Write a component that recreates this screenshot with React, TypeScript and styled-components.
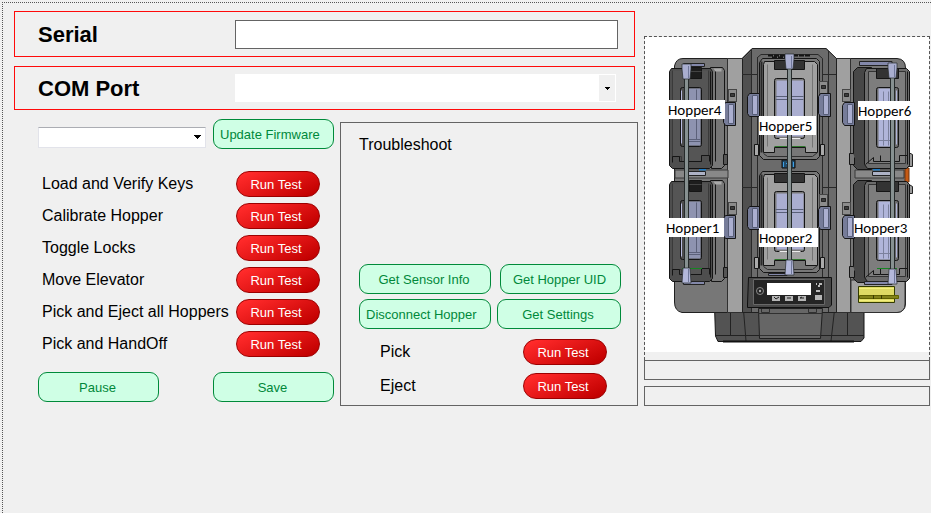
import React from "react";
import styled, { createGlobalStyle } from "styled-components";

const GlobalStyle = createGlobalStyle`
  *, *::before, *::after { box-sizing: border-box; }
  body {
    margin: 0;
    background: #f0f0f0;
    color: #000;
    font-family: "Liberation Sans", Arial, sans-serif;
    font-size: 16px;
  }
  button, input, select { font: inherit; margin: 0; }
`;

const Page = styled.main`
  display: grid;
  grid-template-columns: minmax(0, 624fr) minmax(0, 286fr);
  gap: 6px;
  align-items: start;
  min-height: calc(100vh - 2px);
  margin: 2px 0 0 2px;
  padding: 8px 1px 0 11px;
  border-top: 1px dotted #555;
  border-left: 1px dotted #555;
`;

const Controls = styled.div`
  display: flex;
  flex-direction: column;
`;

const FieldBox = styled.div<{ $height: number; $right: number }>`
  display: grid;
  grid-template-columns: 197px minmax(0, 1fr);
  align-items: center;
  height: ${(p) => p.$height}px;
  margin: 0 3px 9px 0;
  padding: 0 ${(p) => p.$right}px 0 23px;
  border: 1px solid #ff0a0a;
`;

const FieldLabel = styled.label`
  padding-top: 2px;
  font-size: 22px;
  line-height: 26px;
  font-weight: 700;
`;

const TextInput = styled.input`
  width: 100%;
  height: 29px;
  padding: 0 6px;
  border: 1px solid #646464;
  border-radius: 0;
  background: #fff;
`;

const SelectWrap = styled.div`
  display: grid;
  grid-template-columns: minmax(0, 1fr) 17px;
  align-items: center;
`;

const Select = styled.select<{ $large?: boolean }>`
  grid-area: 1 / 1 / 2 / 3;
  appearance: none;
  width: 100%;
  height: ${(p) => (p.$large ? 28 : 21)}px;
  padding: 0 22px 0 6px;
  border: 1px solid ${(p) => (p.$large ? "#fff" : "#e2e3ea")};
  border-top-color: ${(p) => (p.$large ? "#fff" : "#abadb3")};
  border-radius: 0;
  background: #fff;
`;

const ArrowCell = styled.span<{ $shaded?: boolean }>`
  grid-area: 1 / 2;
  display: flex;
  align-items: center;
  justify-content: center;
  height: ${(p) => (p.$shaded ? 26 : 18)}px;
  margin-right: 1px;
  background: ${(p) => (p.$shaded ? "#f0f0f0" : "transparent")};
  pointer-events: none;
`;

const Lower = styled.div`
  display: grid;
  grid-template-columns: minmax(0, 296fr) minmax(0, 298fr);
  gap: 6px;
  align-items: start;
  margin-left: 24px;
`;

const Tests = styled.section`
  display: flex;
  flex-direction: column;
`;

const FirmwareRow = styled.div`
  display: grid;
  grid-template-columns: minmax(0, 1fr) 121px;
  gap: 7px;
  align-items: center;
  height: 30px;
`;

const FirmwareSelect = styled(SelectWrap)`
  padding-top: 6px;
`;

const GreenButton = styled.button<{ $align?: "left" | "center" }>`
  width: 100%;
  height: 30px;
  padding: 2px 8px 0 6px;
  border: 1px solid #008a3a;
  border-radius: 9px;
  background: #cfffe5;
  color: #00883a;
  font-size: 13px;
  line-height: 16px;
  text-align: ${(p) => p.$align ?? "center"};
  white-space: nowrap;
`;

const RedButton = styled.button`
  width: 84px;
  height: 26px;
  padding: 2px 4px 0 0;
  border: 1px solid #9c0000;
  border-radius: 13px;
  background: linear-gradient(155deg, #ff2a2a 10%, #c20000 92%);
  color: #fff;
  font-size: 13px;
  line-height: 16px;
`;

const TestList = styled.ul`
  display: flex;
  flex-direction: column;
  gap: 6px;
  margin: 22px 0 0;
  padding: 0 14px 0 4px;
  list-style: none;
`;

const TestRow = styled.li`
  display: flex;
  align-items: center;
  justify-content: space-between;
  line-height: 20px;
  white-space: nowrap;
`;

const ActionRow = styled.div`
  display: grid;
  grid-template-columns: 121px 121px;
  justify-content: space-between;
  margin-top: 15px;
`;

const Troubleshoot = styled.section`
  margin-top: 3px;
  height: 284px;
  padding: 0 16px 6px 18px;
  border: 1px solid #646464;
  display: flex;
  flex-direction: column;
  justify-content: space-between;
`;

const Title = styled.h2`
  margin: 12px 0 0;
  font-size: 16px;
  line-height: 20px;
  font-weight: 400;
`;

const ButtonRow = styled.div<{ $gap: number }>`
  display: grid;
  grid-template-columns: 132px minmax(0, 1fr);
  gap: ${(p) => p.$gap}px;
  margin-bottom: 5px;
`;

const PickList = styled(TestList)`
  gap: 8px;
  margin: 10px 0 0;
  padding: 0 14px 0 21px;
`;

const Device = styled.section`
  display: flex;
  flex-direction: column;
  margin-top: 25px;
`;

const PictureFrame = styled.figure`
  margin: 0;
  padding-bottom: 8px;
  border: 1px dashed #555;
  border-bottom: 0;
`;

const Picture = styled.svg`
  display: block;
  width: 100%;
  height: auto;
  background: #fff;
`;

const StatusBox = styled.output`
  display: block;
  height: 20px;
  margin-bottom: 6px;
  border: 1px solid #646464;
`;

const Arrow = ({ small }: { small?: boolean }) =>
  small ? (
    <svg width="5" height="3" viewBox="0 0 5 3" shapeRendering="crispEdges" aria-hidden="true">
      <path d="M0 0H5V1H4V2H3V3H2V2H1V1H0Z" />
    </svg>
  ) : (
    <svg width="7" height="4" viewBox="0 0 7 4" shapeRendering="crispEdges" aria-hidden="true">
      <path d="M0 0H7V1H6V2H5V3H4V4H3V3H2V2H1V1H0Z" />
    </svg>
  );

/* Outer-column hopper with its origin at the top left of the bin. */
const LeftHopper = ({ y }: { y: number }) => (
  <g transform={`translate(669.5 ${y + 0.5})`} stroke="#151515">
    <path d="M41 0H53L55 3V98L52 101H42Z" fill="#777" />
    <path d="M44 1H52V4H46Z" fill="#aaa" stroke="none" />
    <path d="M2 1H41L43 4V98L40 101H3L0 98V4Z" fill="#4e4e4e" />
    <path d="M41 4V97M46 4V94" fill="none" />
    <path d="M3 3V89H12V94H32V88H39V3" fill="#555" stroke="#3a3a3a" />
    <path d="M3 95V89H10V94H32V88H40V94" fill="none" />
    <path d="M20 0H32V11H20Z" fill="#1d1d1d" />
    <path d="M20 4H32" stroke="#444" />
    <rect x="11" y="20" width="21" height="59" rx="2" fill="#4c4c4c" />
    <path d="M12 23V76" stroke="#b8bce0" />
    <rect x="19" y="21" width="12" height="57" fill="#8e93b0" stroke="none" />
    <path d="M27 22V72M19 72H31M19 74H31" stroke="#5c617a" />
    <path d="M54 87H58V97H54Z" fill="#555" />
  </g>
);

const RightHopper = ({ y }: { y: number }) => (
  <g transform={`translate(853.5 ${y + 0.5})`} stroke="#151515">
    <path d="M4 0H18V102H4L0 98V4Z" fill="#474747" />
    <path d="M13 1H53L56 4V98L53 101H14L11 97V5Z" fill="#6c6c6c" />
    <path d="M15 4H52V96H15Z" fill="#7d7d7d" stroke="#333" />
    <path d="M12 97L20 90V94H27V88M27 94H46V88H54V97M54 4V90" fill="none" />
    <path d="M23 1H45V11H23Z" fill="#333" />
    <rect x="23" y="20" width="22" height="60" rx="2" fill="#6b6b6b" />
    <rect x="25" y="21" width="14" height="58" fill="#b0b5da" stroke="none" />
    <path d="M43 23V77" stroke="#b0b5da" />
    <path d="M30 24V78M35 24V78M25 73H39" stroke="#7b819d" />
    <path d="M0 86H-4V97H1V90" fill="#777" />
  </g>
);

const CenterHopper = ({ y }: { y: number }) => (
  <g transform={`translate(759.5 ${y + 0.5})`} stroke="#151515">
    <path d="M3 0H57L60 3V98L57 101H4L0 97V4Z" fill="#777" />
    <path d="M1 3H3V94H1Z" fill="#292929" stroke="none" />
    <path d="M5 3H55L58 6V94H46V89H15V94H4V6Z" fill="#a0a0a0" />
    <path d="M8 6V88M53 6V89" stroke="#747474" fill="none" />
    <path d="M4 95L8 98H53L58 94" stroke="#303030" fill="none" />
    <path d="M15 2H45V11H15Z" fill="#333" />
    <rect x="15" y="20" width="30" height="60" rx="2" fill="#787878" />
    <path d="M17 22H44V78H17Z" fill="#aaaed0" stroke="none" />
    <path d="M16 38H44M16 41H44" stroke="#596078" />
    <path d="M20 80H41" stroke="#ececec" />
    <path d="M15 88H46" stroke="#30782e" />
    <path d="M-5 86H-1V97H-5ZM61 86H65V97H61Z" fill="#aaa" />
  </g>
);

const Clip = ({ x, y }: { x: number; y: number }) => (
  <g transform={`translate(${x + 0.5} ${y + 0.5})`} stroke="#151515">
    <path d="M0 0H10V23H0L-2 20V3Z" fill="#767c99" />
    <path d="M3 2H8V21H3Z" fill="#abafd0" stroke="#565d76" />
  </g>
);

const Plate = ({ x, y }: { x: number; y: number }) => (
  <g transform={`translate(${x + 0.5} ${y + 0.5})`} stroke="#222">
    <rect width="8" height="12" fill="#8c8c8c" stroke="#454545" />
    <path d="M2 4H6V7H2ZM2 4L6 7M6 4L2 7" fill="none" />
  </g>
);

const Rod = ({ x, top, bottom }: { x: number; top: number; bottom: number }) => (
  <g stroke="#262b2b">
    <rect x={x - 1.5} y={top + 12} width="4" height={bottom - top - 22} fill="#879191" />
    <path d={`M${x - 4} ${top}h9v5l-1 10h-7l-1-10z`} fill="#a9aecf" strokeWidth=".7" />
    <path d={`M${x - 3} ${bottom - 15}h7l1 15h-9z`} fill="#b3b8da" strokeWidth=".7" />
    <path d={`M${x + 2.5} ${top + 2}v12M${x + 2.5} ${bottom - 14}v13`} stroke="#70789a" />
  </g>
);

const Caption = styled.text`
  font-family: Carlito, Lato, sans-serif;
  font-size: 15px;
  fill: #000;
`;

const captions = [
  { name: "Hopper4", x: 668, y: 100, w: 57 },
  { name: "Hopper5", x: 759, y: 116, w: 57 },
  { name: "Hopper6", x: 858, y: 101, w: 55 },
  { name: "Hopper1", x: 666, y: 218, w: 58 },
  { name: "Hopper2", x: 759, y: 228, w: 59 },
  { name: "Hopper3", x: 854, y: 218, w: 56 },
];

const DevicePicture = () => (
  <Picture viewBox="645 37 284 315" role="img" aria-label="Six hopper device">
    {/* chassis */}
    <path d="M714.500 306H864V338L861 341.500H718L715.500 336Z" fill="#535353" stroke="#151515" />
    <path d="M730.500 310V336M743.500 310L746 341M847.500 310V336M834.500 310L831 341M715 335.500H864" stroke="#222" fill="none" />
    <path d="M674.500 66Q676 58.500 683 58.500H742L752 48.500H826L836 58.500H897Q905.500 59 905.500 68V304Q905 312 897 312.500H682Q674.500 311 674.500 302Z" fill="#777" stroke="#202020" />
    <path d="M727.500 58.500H742.500V312.500H727.500ZM836.500 58.500H850.500V312.500H836.500Z" fill="#a0a0a0" stroke="#303030" />
    <path d="M742.500 58.500L752.500 48.500H826L836.500 58.500V312.500H742.500Z" fill="#6b6b6b" stroke="#202020" />
    <path d="M743 59L752 50V312H743Z" fill="#505050" />
    <path d="M757.500 57.500L761 54.500H818L822.500 58.500V280M751.500 49V312M757.500 57V280M828.500 51V312M742 74.500H758M822 74.500H836M742 187.500H758M822 187.500H836" stroke="#292929" fill="none" />
    <path d="M851 280H905V304Q905 312 897 312.500H851Z" fill="#a0a0a0" stroke="#303030" />
    <path d="M768 55.500H785M772 57.500H785M793 55.500H810" stroke="#151515" strokeWidth="2" strokeDasharray="5 1" />

    {/* fittings between the rows */}
    <path d="M675 170H728V178H675ZM855 170H904V178H855Z" fill="#888" stroke="#383838" />
    <path d="M688.500 171.500H705.500V175.500H688.500ZM872.500 171.500H890.500V175.500H872.500Z" fill="#aeb2c5" stroke="#222" />
    <path d="M699 169.500H706M873 169.500H880" stroke="#217ac0" strokeWidth="2" />
    <path d="M908.500 152.500L912.500 154.500V166.500H908.500M909 184.500L912.500 186.500V193.500H908.500" fill="#999" stroke="#222" />
    <path d="M905 168H909V182H905Z" fill="#c65a14" stroke="#6c3410" />

    <LeftHopper y={67} />
    <LeftHopper y={180} />
    <CenterHopper y={58} />
    <CenterHopper y={171} />
    <RightHopper y={67} />
    <RightHopper y={180} />
    <path d="M682 268.500H702M877 268.500H897" stroke="#168522" />
    <path d="M782 160H795V168H782Z" fill="#244c69" stroke="#111" />
    <path d="M783.500 162V167M793.500 162V167M786 163.500H791" stroke="#3da0e6" />

    <Plate x={728} y={89} />
    <Plate x={728} y={202} />
    <Plate x={842} y={89} />
    <Plate x={842} y={202} />
    <Plate x={819} y={81} />
    <Plate x={819} y={194} />
    <Clip x={725} y={102} />
    <Clip x={725} y={215} />
    <Clip x={749} y={93} />
    <Clip x={749} y={206} />
    <Clip x={820} y={93} />
    <Clip x={820} y={206} />
    <Clip x={844} y={102} />
    <Clip x={844} y={215} />

    {/* rods with their feet */}
    <path d="M683.500 63.500H704.500V66.500H683.500ZM859.500 61.500H892V65.500H859.500ZM683.500 281.500H704.500V284.500H683.500ZM864.500 281.500H892V284.500H864.500ZM768.500 273.500H787V275.500H768.500Z" fill="#8388aa" stroke="#222" />
    <Rod x={686} top={64} bottom={283} />
    <Rod x={789} top={54} bottom={275} />
    <Rod x={892} top={63} bottom={284} />

    {/* display unit */}
    <path d="M748.500 277.500H831.500V305L829 307.500H747.500V304Z" fill="#484848" stroke="#111" />
    <path d="M753.500 279.500H824.500V304.500H753.500Z" fill="#242424" stroke="#686868" />
    <rect x="767" y="283" width="44" height="12" fill="#fff" />
    <circle cx="760" cy="291" r="3.500" fill="#222" stroke="#8a8a8a" />
    <circle cx="760" cy="291" r="1.200" fill="#aaa" />
    <path d="M772 296H780V301H772ZM785 296H793V301H785ZM798 296H806V301H798ZM815 295H822V300H815Z" fill="#b6b6b6" />
    <path d="M774 297L776 299L779 297M787 298H791M804 298H800L802 297" stroke="#222" fill="none" />
    <path d="M816 284H817M819 284H822M818 286H820M816 291H820" fill="none" stroke="#bbb" strokeWidth="2" />
    <path d="M758.500 308.500H822.500L820.500 338.500H759.500Z" fill="#666" stroke="#202020" />
    <path d="M758 313.500H822M760 335.500H820M761.500 309V312.500H769.500V309M808.500 309V312.500H816.500V309" stroke="#303030" fill="none" />
    <path d="M723 341.500H854" stroke="#111" strokeWidth="2" />

    {/* yellow tray */}
    <path d="M858.500 286.500H894.500V302.500H858.500Z" fill="#deda63" stroke="#333b00" />
    <path d="M859 288.500H894M859 300.500H894" stroke="#f3f07d" />
    <path d="M859.500 295.500H898.500V298.500H859.500Z" fill="#828219" stroke="#5e6000" />
    <path d="M873.500 295V299M881.500 295V299" stroke="#3b3c00" />

    {captions.map((c) => (
      <g key={c.name}>
        <rect x={c.x} y={c.y} width={c.w} height="19" fill="#fff" />
        <Caption x={c.x} y={c.y + 15}>
          {c.name}
        </Caption>
      </g>
    ))}
  </Picture>
);

const tests = [
  "Load and Verify Keys",
  "Calibrate Hopper",
  "Toggle Locks",
  "Move Elevator",
  "Pick and Eject all Hoppers",
  "Pick and HandOff",
];

const RunRow = ({ name }: { name: string }) => (
  <TestRow>
    <span>{name}</span>
    <RedButton type="button" aria-label={`Run Test: ${name}`}>
      Run Test
    </RedButton>
  </TestRow>
);

export default function App() {
  return (
    <>
      <GlobalStyle />
      <Page>
        <Controls>
          <FieldBox $height={46} $right={16}>
            <FieldLabel htmlFor="serial">Serial</FieldLabel>
            <TextInput id="serial" type="text" />
          </FieldBox>
          <FieldBox $height={44} $right={18}>
            <FieldLabel htmlFor="port">COM Port</FieldLabel>
            <SelectWrap>
              <Select id="port" $large>
                <option />
              </Select>
              <ArrowCell $shaded>
                <Arrow small />
              </ArrowCell>
            </SelectWrap>
          </FieldBox>
          <Lower>
            <Tests>
              <FirmwareRow>
                <FirmwareSelect>
                  <Select aria-label="Firmware">
                    <option />
                  </Select>
                  <ArrowCell>
                    <Arrow />
                  </ArrowCell>
                </FirmwareSelect>
                <GreenButton type="button" $align="left">
                  Update Firmware
                </GreenButton>
              </FirmwareRow>
              <TestList>
                {tests.map((name) => (
                  <RunRow key={name} name={name} />
                ))}
              </TestList>
              <ActionRow>
                <GreenButton type="button">Pause</GreenButton>
                <GreenButton type="button">Save</GreenButton>
              </ActionRow>
            </Tests>
            <Troubleshoot>
              <Title>Troubleshoot</Title>
              <div>
                <ButtonRow $gap={9}>
                  <GreenButton type="button">Get Sensor Info</GreenButton>
                  <GreenButton type="button">Get Hopper UID</GreenButton>
                </ButtonRow>
                <ButtonRow $gap={6}>
                  <GreenButton type="button" $align="left">
                    Disconnect Hopper
                  </GreenButton>
                  <GreenButton type="button">Get Settings</GreenButton>
                </ButtonRow>
                <PickList>
                  <RunRow name="Pick" />
                  <RunRow name="Eject" />
                </PickList>
              </div>
            </Troubleshoot>
          </Lower>
        </Controls>
        <Device>
          <PictureFrame>
            <DevicePicture />
          </PictureFrame>
          <StatusBox aria-label="Status" />
          <StatusBox aria-label="Details" />
        </Device>
      </Page>
    </>
  );
}
